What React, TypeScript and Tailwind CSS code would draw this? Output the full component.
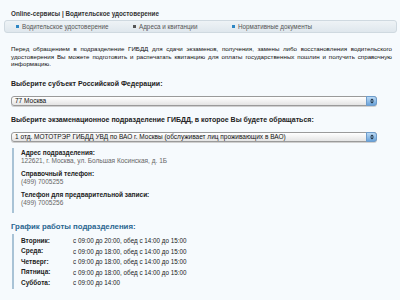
const font = { fontFamily: '"Liberation Sans", Arial, sans-serif' };

const tabs = [
  { label: "Водительское удостоверение", active: true, w: "w-[117px]" },
  { label: "Адреса и квитанции", active: false, w: "w-[99px]" },
  { label: "Нормативные документы", active: true, w: "w-auto" },
];

const intro = [
  "Перед обращением в подразделение ГИБДД для сдачи экзаменов, получения, замены либо восстановления водительского",
  "удостоверения Вы можете подготовить и распечатать квитанцию для оплаты государственных пошлин и получить справочную",
];

const schedule = [
  { day: "Вторник:", time: "с 09:00 до 20:00, обед с 14:00 до 15:00" },
  { day: "Среда:", time: "с 09:00 до 18:00, обед с 14:00 до 15:00" },
  { day: "Четверг:", time: "с 09:00 до 18:00, обед с 14:00 до 15:00" },
  { day: "Пятница:", time: "с 09:00 до 18:00, обед с 14:00 до 15:00" },
  { day: "Суббота:", time: "с 09:00 до 14:00" },
];

function FakeSelect({ value }: { value: string }) {
  return (
    <div className="ml-[11px] w-[366px] h-[10px] flex items-center rounded-[3px] border border-[#9a9a9a] bg-gradient-to-b from-white to-[#e4e4e4] shadow-[0_1px_0_#cfcfcf]">
      <span className="flex-1 pl-[3px] text-[6.5px] leading-[8px] text-[#111] whitespace-nowrap overflow-hidden">
        {value}
      </span>
      <div className="w-[11px] h-[10px] -mr-px rounded-r-[3px] border border-[#6d9ccc] bg-gradient-to-b from-[#b9d9f5] to-[#6aa3da] flex items-center justify-center">
        <svg width="4" height="6" viewBox="0 0 4 6">
          <path d="M0 2.4 L2 0.4 L4 2.4 Z" fill="#1d2c3c" />
          <path d="M0 3.6 L2 5.6 L4 3.6 Z" fill="#1d2c3c" />
        </svg>
      </div>
    </div>
  );
}

export default function App() {
  return (
    <div style={font} className="w-[400px] h-[300px] overflow-hidden bg-[#f6fafd] pt-[9px] text-[#222]">
      {/* Header */}
      <h1 className="pl-[11px] text-[6.3px] leading-[9px] font-bold text-[#333]">
        Online-сервисы | Водительское удостоверение
      </h1>

      {/* Tabs */}
      <div className="mt-[2px] ml-[4px] mr-[3px] h-[13px] flex items-center pl-[11px] rounded-[3px] border border-[#cfd9e0] bg-gradient-to-b from-[#eef3f6] to-[#dfe7ed]">
        {tabs.map((t) => (
          <div key={t.label} className={`${t.w} flex items-center gap-[3px]`}>
            <span className={`w-[3px] h-[3px] ${t.active ? "bg-[#2d86c4]" : "bg-[#555]"}`} />
            <span className="text-[6.3px] leading-[8px] text-[#555] whitespace-nowrap">{t.label}</span>
          </div>
        ))}
      </div>

      {/* Intro */}
      <div className="mt-[12px] pl-[11px] pr-[8px] text-[6.2px] leading-[7.5px] text-[#111]">
        {intro.map((line) => (
          <div key={line} className="text-justify [text-align-last:justify] whitespace-nowrap">
            {line}
          </div>
        ))}
        <div>информацию.</div>
      </div>

      <p className="mt-[11px] pl-[11px] text-[7px] leading-[9px] font-bold">Выберите субъект Российской Федерации:</p>
      <div className="mt-[8px]">
        <FakeSelect value="77 Москва" />
      </div>

      <p className="mt-[9.5px] pl-[11px] text-[7px] leading-[9px] font-bold">
        Выберите экзаменационное подразделение ГИБДД, в которое Вы будете обращаться:
      </p>
      <div className="mt-[7.5px]">
        <FakeSelect value="1 отд. МОТОТРЭР ГИБДД УВД по ВАО г. Москвы (обслуживает лиц проживающих в ВАО)" />
      </div>

      {/* Subdivision info */}
      <div className="mt-[6px] ml-[12px] border-l-2 border-[#a9c3d6] pl-[7px] pt-[1px] pb-[6px] flex flex-col gap-[5px]">
        <div>
          <p className="text-[6.5px] leading-[8px] font-bold">Адрес подразделения:</p>
          <p className="text-[6.5px] leading-[8px] text-[#666]">122621, г. Москва, ул. Большая Косинская, д. 1Б</p>
        </div>
        <div>
          <p className="text-[6.5px] leading-[8px] font-bold">Справочный телефон:</p>
          <p className="text-[6.5px] leading-[8px] text-[#666]">(499) 7005255</p>
        </div>
        <div>
          <p className="text-[6.5px] leading-[8px] font-bold">Телефон для предварительной записи:</p>
          <p className="text-[6.5px] leading-[8px] text-[#666]">(499) 7005256</p>
        </div>
      </div>

      <h2 className="mt-[9px] pl-[11px] text-[7.8px] leading-[10px] font-bold text-[#2a6690]">
        График работы подразделения:
      </h2>

      <div className="mt-[2px] ml-[12px] border-l-2 border-[#a9c3d6] pl-[7px] pt-[2px] pb-[1px]">
        {schedule.map((s) => (
          <div key={s.day} className="flex h-[10.5px] items-center">
            <span className="w-[52px] text-[6.5px] font-bold">{s.day}</span>
            <span className="text-[6.3px] text-[#222]">{s.time}</span>
          </div>
        ))}
      </div>
    </div>
  );
}
